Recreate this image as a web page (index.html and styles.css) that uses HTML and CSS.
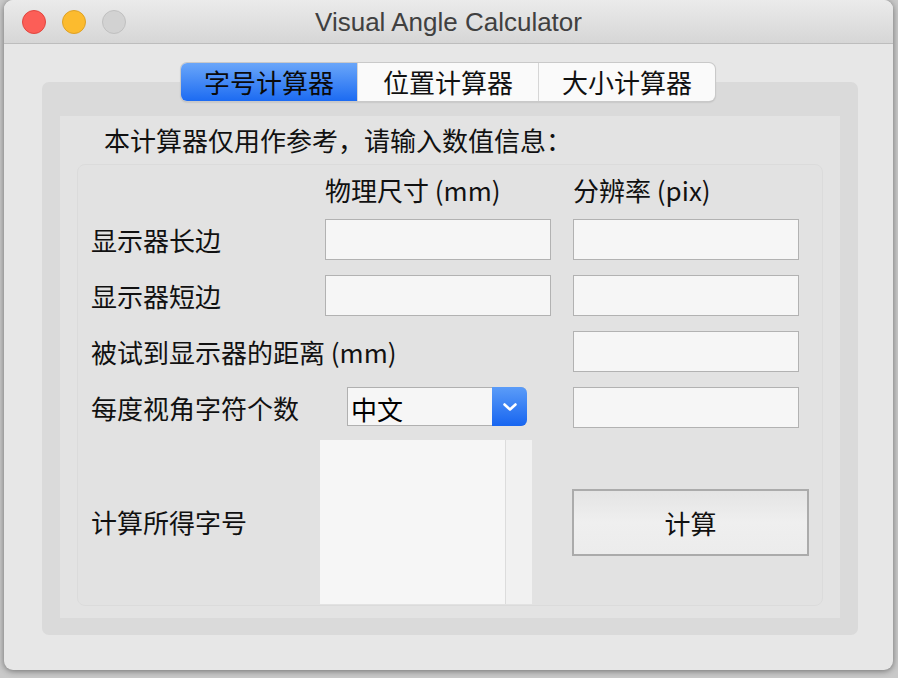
FILE: index.html
```html
<!DOCTYPE html>
<html lang="zh">
<head>
<meta charset="utf-8">
<title>Visual Angle Calculator</title>
<link rel="stylesheet" href="styles.css">
</head>
<body>
<div class="window">
  <div class="titlebar">
    <div class="lights">
      <span class="light red"></span>
      <span class="light yellow"></span>
      <span class="light gray"></span>
    </div>
    <div class="title">Visual Angle Calculator</div>
  </div>
  <div class="content">
    <div class="tabs">
      <div class="tab active t1">字号计算器</div>
      <div class="tab t2">位置计算器</div>
      <div class="tab t3">大小计算器</div>
    </div>
    <div class="tabbox">
      <div class="panel">
        <div class="desc">本计算器仅用作参考，请输入数值信息：</div>
        <div class="group">
          <div class="row head">
            <div></div>
            <div class="colhead">物理尺寸 (mm)</div>
            <div class="colhead">分辨率 (pix)</div>
          </div>
          <div class="row">
            <div class="label">显示器长边</div>
            <div class="input"></div>
            <div class="input"></div>
          </div>
          <div class="row">
            <div class="label">显示器短边</div>
            <div class="input"></div>
            <div class="input"></div>
          </div>
          <div class="row">
            <div class="label wide">被试到显示器的距离 (mm)</div>
            <div class="input"></div>
          </div>
          <div class="row">
            <div class="label">每度视角字符个数</div>
            <div class="select">
              <span class="select-text">中文</span>
              <span class="select-btn">
                <svg width="16" height="10" viewBox="0 0 16 10"><path d="M2.5 2.5 L8 7.5 L13.5 2.5" fill="none" stroke="#fff" stroke-width="2.6" stroke-linecap="round" stroke-linejoin="round"/></svg>
              </span>
            </div>
            <div class="input"></div>
          </div>
          <div class="row result">
            <div class="label">计算所得字号</div>
            <div class="textarea"><div class="scroll"></div></div>
            <div class="btncell"><div class="button">计算</div></div>
          </div>
        </div>
      </div>
    </div>
  </div>
</div>
</body>
</html>
```

FILE: styles.css
```css
html, body {
  margin: 0;
  padding: 0;
}
body {
  width: 898px;
  height: 678px;
  background: #c9c9c9;
  overflow: hidden;
  font-family: "Noto Sans CJK SC", "Noto Sans", sans-serif;
  color: #111;
}
.window {
  margin-left: 4px;
  width: 889px;
  height: 670px;
  border-radius: 9px;
  background: #e7e7e7;
  overflow: hidden;
  box-shadow: 0 1px 6px rgba(0,0,0,0.45);
  display: flex;
  flex-direction: column;
}
.titlebar {
  height: 43px;
  flex: none;
  border-bottom: 1px solid #bdbdbd;
  background: linear-gradient(#ebebeb, #d6d6d6);
  display: flex;
  align-items: center;
  position: relative;
}
.lights {
  display: flex;
  gap: 16px;
  padding-left: 18px;
}
.light {
  width: 22px;
  height: 22px;
  border-radius: 50%;
  display: block;
}
.red { background: #fc5e57; border: 1px solid #e1463f; }
.yellow { background: #fcbb2e; border: 1px solid #dea126; }
.gray { background: #d2d2d2; border: 1px solid #c0c0c0; }
.title {
  position: absolute;
  left: 0;
  right: 0;
  top: 1px;
  line-height: 43px;
  text-align: center;
  font-family: "Liberation Sans", Arial, sans-serif;
  font-size: 26px;
  color: #404040;
}
.content {
  flex: 1;
  padding-top: 19px;
  display: flex;
  flex-direction: column;
  align-items: flex-start;
}
.tabs {
  position: relative;
  z-index: 2;
  display: flex;
  height: 38px;
  margin-left: 177px;
  border-radius: 6px;
  background: #fafafa;
  box-shadow: 0 0 0 1px #c9c9c9, 0 1px 2px rgba(0,0,0,0.25);
}
.tab {
  height: 38px;
  line-height: 38px;
  text-align: center;
  font-size: 26px;
  color: #111;
}
.tab + .tab { border-left: 1px solid #d6d6d6; }
.t1 { width: 176px; }
.t2 { width: 180px; }
.t3 { width: 176px; }
.tab.active {
  background: linear-gradient(#6aa6f9, #1c6bf2);
  border-radius: 6px 0 0 6px;
  color: #0a0a0a;
}
.tabbox {
  margin-top: -19px;
  margin-left: 38px;
  width: 780px;
  height: 502px;
  padding: 34px 18px 17px;
  background: #dadada;
  border-radius: 7px;
}
.panel {
  height: 502px;
  box-sizing: border-box;
  background: #e3e3e3;
  padding: 7px 17px 12px;
}
.desc {
  font-size: 26px;
  line-height: 34px;
  padding-left: 27px;
  margin-bottom: 7px;
  color: #111;
}
.group {
  height: 442px;
  box-sizing: border-box;
  border: 1px solid #dbdbdb;
  border-radius: 8px;
  background: #e2e2e2;
  padding: 11px 0 1px 13px;
}
.row {
  display: grid;
  grid-template-columns: 212px 226px 226px;
  column-gap: 22px;
  height: 41px;
  align-items: center;
}
.row + .row { margin-top: 15px; }
.row.head { height: 28px; }
.row.result {
  margin-top: 12px;
  height: 164px;
}
.colhead {
  font-size: 26px;
  line-height: 28px;
  color: #111;
}
.label {
  font-size: 26px;
  line-height: 34px;
  color: #111;
  white-space: nowrap;
}
.label.wide { grid-column: 1 / 3; }
.input {
  height: 41px;
  box-sizing: border-box;
  border: 1px solid #b2b2b2;
  background: #f6f6f6;
}
.select {
  margin-left: 22px;
  width: 180px;
  height: 39px;
  align-self: start;
  box-sizing: border-box;
  border: 1px solid #b0b0b0;
  border-right: none;
  border-radius: 0 6px 6px 0;
  background: #f6f6f6;
  display: flex;
  align-items: center;
}
.select-text {
  flex: 1;
  font-size: 26px;
  line-height: 37px;
  padding-left: 3px;
  padding-top: 4px;
  color: #000;
}
.select-btn {
  width: 35px;
  height: 39px;
  margin-top: -1px;
  margin-bottom: -1px;
  border-radius: 0 6px 6px 0;
  background: linear-gradient(#5b9cf8, #1765f0);
  display: flex;
  align-items: center;
  justify-content: center;
}
.textarea {
  margin-left: -5px;
  width: 212px;
  height: 164px;
  background: #f6f6f6;
  display: flex;
  justify-content: flex-end;
}
.scroll {
  width: 26px;
  height: 164px;
  border-left: 1px solid #dcdcdc;
  background: #f1f1f1;
}
.btncell {
  display: flex;
  align-items: center;
}
.button {
  margin-left: -1px;
  width: 237px;
  height: 67px;
  flex: none;
  box-sizing: border-box;
  border: 2px solid #ababab;
  background: linear-gradient(#e4e4e4, #efefef 50%, #ececec);
  font-size: 26px;
  line-height: 63px;
  text-align: center;
  color: #111;
}
```
